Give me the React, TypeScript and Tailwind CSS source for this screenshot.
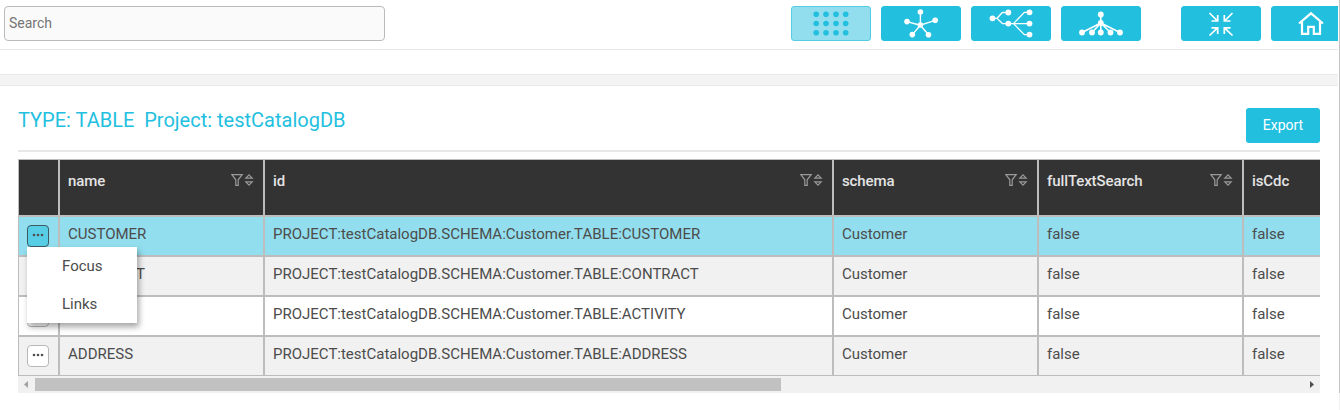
import React from "react";

type Row = { name: string; selected?: boolean; shade: string };

const rows: Row[] = [
  { name: "CUSTOMER", selected: true, shade: "bg-[#92deee]" },
  { name: "CONTRACT", shade: "bg-[#f1f1f1]" },
  { name: "ACTIVITY", shade: "bg-white" },
  { name: "ADDRESS", shade: "bg-[#f1f1f1]" },
];

const columns = [
  { label: "name", width: "w-[205px]" },
  { label: "id", width: "w-[569px]" },
  { label: "schema", width: "w-[205px]" },
  { label: "fullTextSearch", width: "w-[205px]" },
  { label: "isCdc", width: "w-[205px]" },
];

function valuesOf(row: Row) {
  return [
    row.name,
    `PROJECT:testCatalogDB.SCHEMA:Customer.TABLE:${row.name}`,
    "Customer",
    "false",
    "false",
  ];
}

function ToolButton({ children, active }: { children: React.ReactNode; active?: boolean }) {
  return (
    <button
      className={`h-[35px] w-20 shrink-0 rounded-[3px] border ${
        active ? "border-[#55cce4] bg-[#92deee]" : "border-[#23bfdf] bg-[#23bfdf]"
      }`}
    >
      <svg viewBox="0 0 80 35" className="-m-px block h-[35px] w-20 max-w-none">
        {children}
      </svg>
    </button>
  );
}

function Dots({ points, r }: { points: number[][]; r: number }) {
  return (
    <>
      {points.map(([x, y]) => (
        <circle key={`${x}-${y}`} cx={x} cy={y} r={r} />
      ))}
    </>
  );
}

const gridPoints = [8.3, 17.5, 26.7].flatMap((y) => [25.2, 35, 45, 54.7].map((x) => [x, y]));

function Toolbar() {
  return (
    <div className="flex gap-2.5">
      <ToolButton active>
        <g fill="#23bfdf">
          <Dots points={gridPoints} r={2.8} />
        </g>
      </ToolButton>
      <ToolButton>
        <g fill="#fff">
          <path
            d="M39.4 19.2V6M39.4 19.2L26 15.6M39.4 19.2L54.2 14.3M39.4 19.2L31.3 28.6M39.4 19.2L47.5 28.8"
            stroke="#fff"
            strokeWidth="1.4"
          />
          <Dots points={[[39.4, 6], [26, 15.6], [54.2, 14.3], [31.3, 28.6], [47.5, 28.8], [39.4, 19]]} r={2.8} />
        </g>
      </ToolButton>
      <ToolButton>
        <path
          d="M21.5 12.3H26L31.3 6.5H37M26 12.3L31.5 17.6H58.5M42.5 17.6L53.4 6.3H58.5M42.5 17.6L53.4 28.6H58.5"
          fill="none"
          stroke="#fff"
          strokeWidth="1.3"
        />
        <g fill="#fff">
          <Dots points={[[21.5, 12.3], [37.3, 6.5], [37.3, 17.6], [58.5, 6.3], [58.5, 17.6], [58.5, 28.6]]} r={2.9} />
        </g>
      </ToolButton>
      <ToolButton>
        <g fill="#fff">
          <path
            d="M39.8 8.5V26M39.8 17L21 26.5M39.8 17L31 26.5M39.8 17L49.5 26.5M39.8 17L59 26.5"
            stroke="#fff"
            strokeWidth="1.6"
          />
          <Dots points={[[39.8, 8.5], [39.8, 17], [21, 26.5], [31, 26.5], [39.8, 26.5], [49.5, 26.5], [59, 26.5]]} r={2.9} />
        </g>
      </ToolButton>
      <div className="w-5 shrink-0" />
      <ToolButton>
        <path
          d="M28.5 7L36.5 15M36.7 9V15H30.5M51.5 7L43.5 15M43.3 9V15H49.5M28.5 29.5L36.5 21.8M30.5 21.8H36.7V28M51.5 29.5L43.5 21.8M49.5 21.8H43.3V28"
          fill="none"
          stroke="#fff"
          strokeWidth="1.7"
        />
      </ToolButton>
      <ToolButton>
        <path
          d="M28 17.5L40 7.3L52 17.5M31 16V27.8H37.2V20.8H42.8V27.8H49V16"
          fill="none"
          stroke="#fff"
          strokeWidth="2.2"
        />
      </ToolButton>
    </div>
  );
}

function HeaderIcons() {
  return (
    <svg width="23" height="14" viewBox="0 0 23 14" fill="none" stroke="#999" strokeWidth="1.2">
      <path d="M0.8 1.6H11.2L7.2 6.8V12.4H4.8V6.8Z" />
      <path d="M14.8 5.2L18 1.8L21.2 5.2ZM14.8 8.8L18 12.2L21.2 8.8Z" />
    </svg>
  );
}

function RowButton({ active }: { active?: boolean }) {
  return (
    <button
      className={`flex h-[22px] w-[22px] items-center justify-center rounded-[4px] border ${
        active ? "border-[#3c5a62] bg-[#57cde6]" : "border-[#b8b8b8] bg-white"
      }`}
    >
      <svg width="12" height="4" viewBox="0 0 12 4" fill="#505050" className="mb-[2px]">
        <Dots points={[[2, 2], [6, 2], [10, 2]]} r={1.3} />
      </svg>
    </button>
  );
}

function RowMenu() {
  return (
    <div className="flex h-[76px] w-[110px] flex-col bg-white text-[15px] text-[#4c4c4c] shadow-[2px_4px_6px_rgba(0,0,0,0.35)]">
      {["Focus", "Links"].map((item) => (
        <div key={item} className="flex h-[38px] items-center pl-[35px]">
          {item}
        </div>
      ))}
    </div>
  );
}

export default function App() {
  return (
    <div className="flex h-[410px] w-[1340px] overflow-hidden bg-white font-[Roboto,sans-serif] text-[15px] text-[#4c4c4c]">
      <div className="w-[1338px] shrink-0 overflow-hidden">
        <header className="flex h-[50px] items-start justify-between border-b border-[#e8e8e8] pt-1.5 pl-1">
          <input
            placeholder="Search"
            className="h-[35px] w-[381px] rounded-[4px] border border-[#bbb] bg-[#fafafa] px-1 pb-0.5 text-sm placeholder:text-[#757575]"
          />
          <div className="w-[547px]">
            <Toolbar />
          </div>
        </header>
        <div className="h-6" />
        <div className="h-3 border-y border-[#e8e8e8] bg-[#f4f4f4]" />
        <main className="w-[1320px] pl-[18px]">
          <div className="flex h-[66px] items-start justify-between border-b-2 border-[#e8e8e8]">
            <h1 className="mt-[19px] text-xl leading-[30px] whitespace-pre text-[#23bfdf]">
              {"TYPE: TABLE  Project: testCatalogDB"}
            </h1>
            <button className="mt-[22px] h-[35px] w-[74px] rounded-[3px] bg-[#23bfdf] pb-0.5 text-sm text-white">
              Export
            </button>
          </div>
          <div className="mt-[7px] overflow-hidden">
            <div className="flex h-[57px] w-[1430px] bg-[#333] text-[15px] font-medium text-[#e4e4e4]">
              <div className="w-[41px] border border-[#bdbdbd]" />
              {columns.map((column) => (
                <div
                  key={column.label}
                  className={`flex items-start justify-between border border-[#bdbdbd] pt-[10px] pr-[9px] pl-2 ${column.width}`}
                >
                  <span className="leading-[22px] tracking-[-0.1px]">{column.label}</span>
                  <span className="mt-[3px]">
                    <HeaderIcons />
                  </span>
                </div>
              ))}
            </div>
            {rows.map((row) => (
              <div key={row.name} className={`flex h-10 w-[1430px] ${row.shade}`}>
                <div className="w-[41px] border border-[#bdbdbd] pt-2 pl-2">
                  <RowButton active={row.selected} />
                </div>
                {valuesOf(row).map((value, index) => (
                  <div
                    key={columns[index].label}
                    className={`border border-[#bdbdbd] pt-[6px] pl-2 leading-[23px] whitespace-nowrap ${columns[index].width}`}
                  >
                    {value}
                  </div>
                ))}
              </div>
            ))}
          </div>
          <div className="relative flex h-[17px] items-center justify-between bg-[#f1f1f1]">
            <div className="absolute -top-[129px] left-[9px]">
              <RowMenu />
            </div>
            <svg width="17" height="17" className="shrink-0">
              <path d="M10 5V12L6 8.5Z" fill="#a3a3a3" />
            </svg>
            <div className="h-[13px] w-[746px] bg-[#c1c1c1]" />
            <div className="flex-1" />
            <svg width="17" height="17" className="shrink-0">
              <path d="M7 5V12L11 8.5Z" fill="#505050" />
            </svg>
          </div>
        </main>
      </div>
      <div className="ml-px flex w-px flex-col">
        <div className="h-[393px] bg-[#c4c4c4]" />
        <div className="flex-1 bg-[#f1f1f1]" />
      </div>
    </div>
  );
}
